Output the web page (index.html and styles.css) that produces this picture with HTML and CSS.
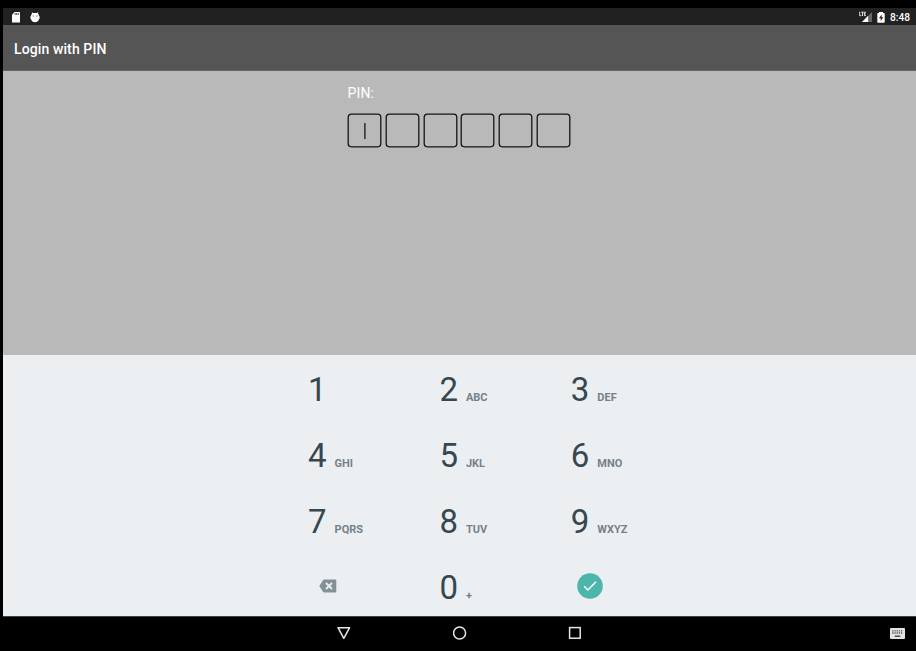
FILE: index.html
```
<!DOCTYPE html>
<html lang="en">
<head>
<meta charset="utf-8">
<title>Login with PIN</title>
<link rel="stylesheet" href="styles.css">
</head>
<body>
<div class="device">
  <div class="status">
    <svg class="sd" width="8" height="11" viewBox="0 0 8 11"><path fill="#fff" d="M2.6 0H7.4Q8 0 8 .7V10Q8 10.5 7.4 10.5H.6Q0 10.5 0 10V2.8Z"/><path stroke="#222" stroke-width=".8" d="M3.1 1v2M4.7 1v2M6.3 1v2"/></svg>
    <svg class="bug" width="10" height="11" viewBox="0 0 10 11"><path fill="#fff" d="M1 4Q1 2.5 2.2 1.6L1.6.6 2.2 .2 3 1.1H7L7.8 .2 8.4.6 7.8 1.6Q9 2.5 9 4H9.5V7H9Q8.6 10 5 10.2 1.4 10 1 7H.5V4Z"/><path fill="#444" d="M2.7 3.5h1v1h-1zM6.3 3.5h1v1h-1z"/></svg>
    <span class="spacer"></span>
    <svg class="signal" width="14" height="12" viewBox="0 0 14 12"><path fill="#666" d="M13 1V11H3Z"/><path fill="#fff" d="M9.2 4.8V11H3Z"/><path fill="none" stroke="#ddd" stroke-width="1" d="M.7 .8V4.7H2.4M2.2 1.2H4.8M3.5 1.2V5M7 1.2H5.4V4.6H7M5.4 2.9H6.8"/></svg>
    <svg class="battery" width="8" height="11" viewBox="0 0 8 11"><path fill="#fff" d="M2 0h4v1H7Q7.7 1 7.7 1.7V10Q7.7 10.8 7 10.8H1Q.3 10.8 .3 10V1.7Q.3 1 1 1H2Z"/><path fill="#222" d="M4.7 2.5 2 6.3H3.7V9L6.2 5.3H4.7Z"/></svg>
    <span class="clock">8:48</span>
  </div>
  <header class="appbar">Login with PIN</header>
  <main class="content">
    <div class="pin">
      <label class="pin-label">PIN:</label>
      <div class="boxes">
        <svg width="36" height="36" viewBox="0 0 36 36"><rect x="1.2" y="1.2" width="32.6" height="32.6" rx="3.2"/><path d="M17.9 10V26"/></svg>
        <svg width="36" height="36" viewBox="0 0 36 36"><rect x="1.2" y="1.2" width="32.6" height="32.6" rx="3.2"/></svg>
        <svg width="36" height="36" viewBox="0 0 36 36"><rect x="1.2" y="1.2" width="32.6" height="32.6" rx="3.2"/></svg>
        <svg width="36" height="36" viewBox="0 0 36 36"><rect x="1.2" y="1.2" width="32.6" height="32.6" rx="3.2"/></svg>
        <svg width="36" height="36" viewBox="0 0 36 36"><rect x="1.2" y="1.2" width="32.6" height="32.6" rx="3.2"/></svg>
        <svg width="36" height="36" viewBox="0 0 36 36"><rect x="1.2" y="1.2" width="32.6" height="32.6" rx="3.2"/></svg>
      </div>
    </div>
  </main>
  <section class="keyboard">
    <div class="key">1</div>
    <div class="key">2<small>ABC</small></div>
    <div class="key">3<small>DEF</small></div>
    <div class="key">4<small>GHI</small></div>
    <div class="key">5<small>JKL</small></div>
    <div class="key">6<small>MNO</small></div>
    <div class="key">7<small>PQRS</small></div>
    <div class="key">8<small>TUV</small></div>
    <div class="key">9<small>WXYZ</small></div>
    <div class="action erase"><svg width="18" height="14" viewBox="0 0 18 14"><path fill="#829195" d="M5.2 .5H16Q17.3 .5 17.3 1.8V12.2Q17.3 13.5 16 13.5H5.2Q4.5 13.5 4 12.8L.3 7 4 1.2Q4.5 .5 5.2 .5Z"/><path stroke="#eceff1" stroke-width="1.8" d="M7 4l6 6M13 4l-6 6"/></svg></div>
    <div class="key">0<small>+</small></div>
    <div class="action done"><svg width="26" height="26" viewBox="0 0 26 26"><circle cx="13" cy="13" r="12.8" fill="#4db6ac"/><path fill="none" stroke="#fff" stroke-width="1.5" d="M7.2 13.2 10.9 17 19 8.8"/></svg></div>
  </section>
  <nav class="nav">
    <svg width="14" height="14" viewBox="0 0 14 14"><path fill="none" stroke="#e6e6e6" stroke-width="1.5" stroke-linejoin="round" d="M1 1.7H12.6L6.8 12.3Z"/></svg>
    <svg width="14" height="14" viewBox="0 0 14 14"><circle cx="6.6" cy="7" r="6" fill="none" stroke="#e6e6e6" stroke-width="1.5"/></svg>
    <svg width="14" height="14" viewBox="0 0 14 14"><rect x="1.6" y="1.6" width="10.6" height="10.6" fill="none" stroke="#e6e6e6" stroke-width="1.5"/></svg>
    <svg class="ime" width="15" height="11" viewBox="0 0 15 11"><rect width="15" height="11" rx="1" fill="#e4e4e4"/><path stroke="#555" stroke-width="1.3" stroke-dasharray="1.3 .9" d="M2.2 2.8H13M2.2 5H13"/><path stroke="#444" stroke-width="1.4" d="M4.7 8.2h5.6"/></svg>
  </nav>
</div>
</body>
</html>
```
FILE: styles.css
```
* { box-sizing: border-box; }
body { margin: 0; background: #000; font-family: Roboto, sans-serif; }
svg { display: block; flex: none; }
.device {
  width: 916px; height: 651px; padding: 8px 0 0 3px;
  display: flex; flex-direction: column; overflow: hidden;
}
.status {
  height: 17px; flex: none; background: #212121; color: #fff;
  display: flex; align-items: center; padding: 1px 6px 0 9px;
}
.bug { margin-left: 10px; }
.spacer { flex: 1; }
.battery { margin: 0 5px 0 4px; }
.clock { font-size: 10.2px; font-weight: 500; line-height: 16px; width: 20px; padding-top: 1px; white-space: nowrap; }
.appbar {
  height: 46px; flex: none; background: #555; color: #fff;
  padding-left: 11px; font-size: 14px; font-weight: 500; line-height: 48px; letter-spacing: .11px;
  border-bottom: 1px solid #656565;
}
.content { height: 284px; flex: none; background: #b9b9b9; padding: 13px 0 0 344px; }
.pin-label {
  display: block; color: #fff; font-size: 14px; line-height: 18px; height: 29px;
  padding-left: .6px; letter-spacing: .1px;
}
.boxes { display: flex; gap: 1.8px; }
.boxes svg { fill: none; stroke: #151515; stroke-width: 1.3px; }
.keyboard {
  height: 261px; flex: none; background: #eceff1; padding: 1.5px 0 0 305px;
  display: grid; grid-template-columns: repeat(3, 131.4px); grid-auto-rows: 66px;
}
.key { color: #37474f; font-size: 33px; line-height: 66px; white-space: nowrap; }
.key small { color: #74828a; font-size: 11px; font-weight: 700; margin-left: 8px; }
.erase { padding: 24.5px 0 0 10.5px; }
.done { padding: 18.5px 0 0 6px; }
.nav {
  height: 35px; flex: none; background: #000; border-top: 1px solid #444;
  display: flex; align-items: center; gap: 101.5px; padding: 0 0 2px 334px;
}
.ime { margin-left: auto; margin-right: 11px; }
```
